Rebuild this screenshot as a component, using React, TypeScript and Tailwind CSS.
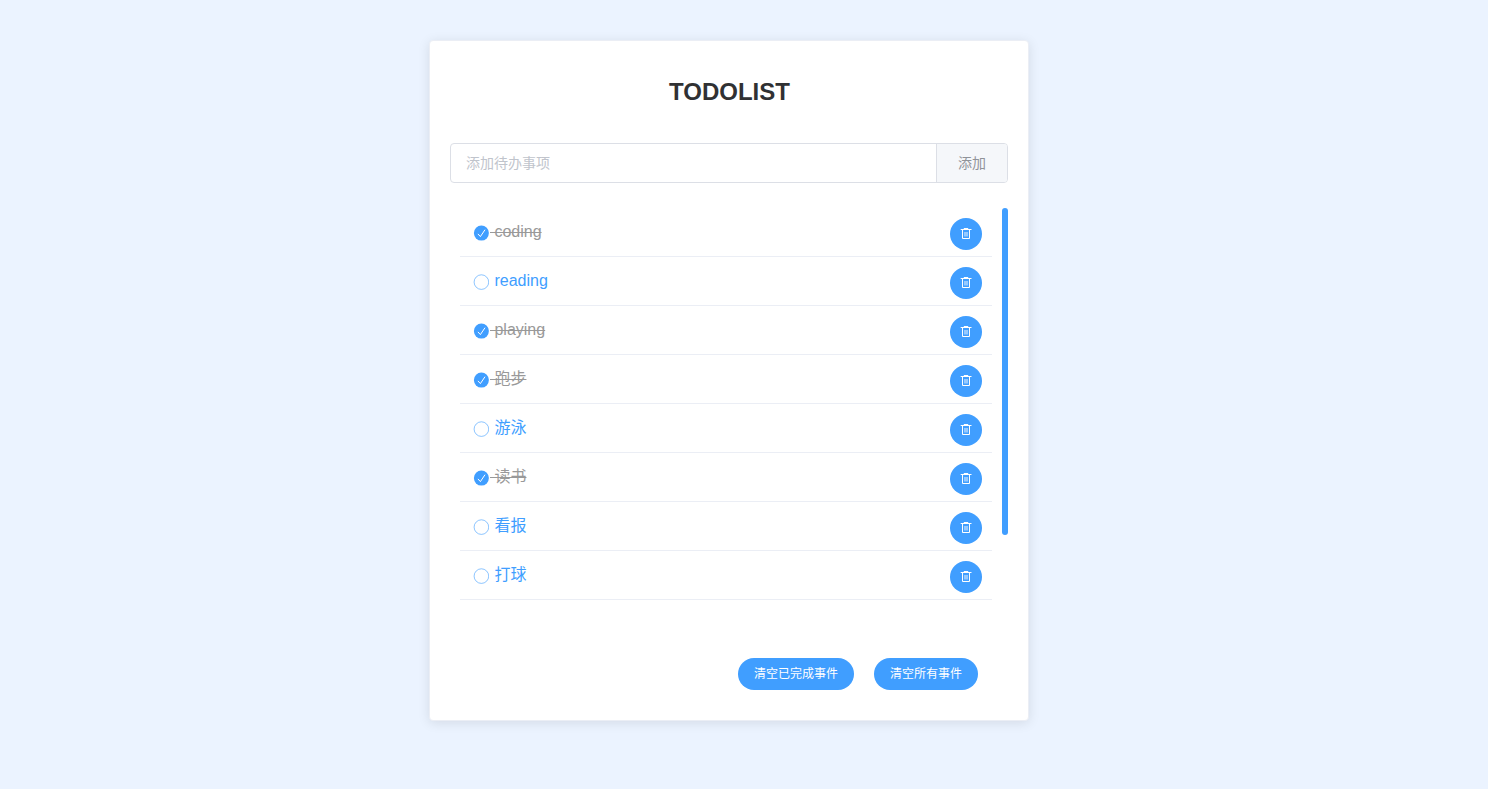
import React, { useState } from 'react';

type Todo = { id: number; text: string; done: boolean };

const initialTodos: Todo[] = [
  { id: 1, text: 'coding', done: true },
  { id: 2, text: 'reading', done: false },
  { id: 3, text: 'playing', done: true },
  { id: 4, text: '跑步', done: true },
  { id: 5, text: '游泳', done: false },
  { id: 6, text: '读书', done: true },
  { id: 7, text: '看报', done: false },
  { id: 8, text: '打球', done: false },
];

function TrashIcon() {
  return (
    <svg className="size-3" viewBox="0 0 12 12" fill="none" stroke="currentColor">
      <path d="M0.7 1.5h10.8M3.8 0.5h4.4M2.5 1.5v9h7v-9" />
      <path d="M5 4v4.5M7 4v4.5" strokeWidth="0.9" />
    </svg>
  );
}

function StatusIcon({ done }: { done: boolean }) {
  return (
    <svg className="mt-[17px] size-4 shrink-0" viewBox="0 0 16 16" fill="none">
      {done ? (
        <>
          <circle cx="8.4" cy="8.1" r="7.5" fill="#409eff" />
          <path d="M4.9 8.9 7.4 11.6 12 4.7" stroke="white" strokeWidth="1" />
        </>
      ) : (
        <circle cx="8.4" cy="8.1" r="7.3" stroke="#409eff" strokeWidth="0.6" />
      )}
    </svg>
  );
}

export default function App() {
  const [todos, setTodos] = useState(initialTodos);
  const [draft, setDraft] = useState('');

  const add = () => {
    if (!draft.trim()) return;
    setTodos([...todos, { id: Date.now(), text: draft.trim(), done: false }]);
    setDraft('');
  };
  const toggle = (id: number) =>
    setTodos(todos.map((t) => (t.id === id ? { ...t, done: !t.done } : t)));

  return (
    <div className="flex h-screen justify-center overflow-hidden bg-[#ebf3ff] pt-10 pr-[30px] font-['Liberation_Sans','Noto_Sans_CJK_SC',sans-serif]">
      <main className="flex h-[681px] w-[600px] flex-col rounded border border-[#ebeef5] bg-white px-5 shadow-[0_2px_12px_0_rgba(0,0,0,0.1)]">
        <h1 className="mt-[35px] pl-px text-center text-2xl leading-8 font-bold text-[#303133]">TODOLIST</h1>

        <div className="mt-[35px] flex h-10 shrink-0 overflow-hidden rounded border border-[#dcdfe6] text-sm">
          <input
            className="min-w-0 flex-1 px-[15px] text-[#606266] outline-none placeholder:text-[#c0c4cc]"
            placeholder="添加待办事项"
            value={draft}
            onChange={(e) => setDraft(e.target.value)}
          />
          <button className="w-[71px] border-l border-[#dcdfe6] bg-[#f5f7fa] text-[#909399]" onClick={add}>
            添加
          </button>
        </div>

        <div className="mt-[25px] flex h-[400px] shrink-0 justify-between">
          <ul className="ml-2.5 w-[532px] overflow-hidden">
            {todos.map((todo) => (
              <li key={todo.id} className="flex h-[49px] border-b border-[#ebeef5] pr-2.5 pl-[13px]">
                <button className="flex flex-1 items-start text-left" onClick={() => toggle(todo.id)}>
                  <StatusIcon done={todo.done} />
                  <span
                    className={
                      todo.done
                        ? 'mt-3 ml-px leading-6 whitespace-pre text-[#999999] line-through decoration-1'
                        : 'mt-3 ml-px leading-6 whitespace-pre text-[#409eff]'
                    }
                  >
                    {' ' + todo.text}
                  </span>
                </button>
                <button
                  className="mt-2.5 flex size-8 items-center justify-center rounded-full bg-[#409eff] text-white"
                  aria-label="删除"
                  onClick={() => setTodos(todos.filter((t) => t.id !== todo.id))}
                >
                  <TrashIcon />
                </button>
              </li>
            ))}
          </ul>
          <div className="h-[327px] w-1.5 rounded-full bg-[#409eff]" />
        </div>

        <div className="mt-[50px] mr-[30px] flex justify-end gap-5 text-xs text-white">
          <button
            className="h-8 w-[116px] rounded-full bg-[#409eff]"
            onClick={() => setTodos(todos.filter((t) => !t.done))}
          >
            清空已完成事件
          </button>
          <button className="h-8 w-[104px] rounded-full bg-[#409eff]" onClick={() => setTodos([])}>
            清空所有事件
          </button>
        </div>
      </main>
    </div>
  );
}
